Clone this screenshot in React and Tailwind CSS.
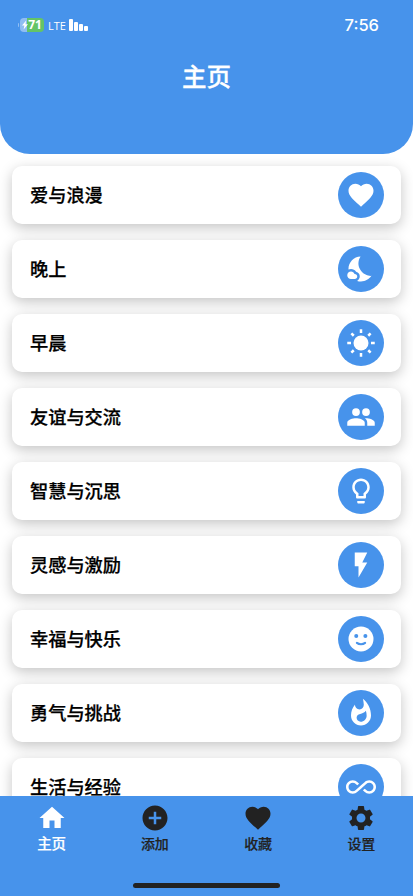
import React, { useState } from "react";
import {
  MdAddCircle,
  MdAllInclusive,
  MdFavorite,
  MdFlashOn,
  MdHome,
  MdLightbulbOutline,
  MdNightsStay,
  MdSettings,
  MdWhatshot,
} from "react-icons/md";

const SmileIcon = ({ size }) => (
  <svg width={size} height={size} viewBox="0 0 24 24" fill="currentColor">
    <circle cx="12" cy="12" r="10" />
    <g className="fill-[#4793eb]">
      <circle cx="8.2" cy="9.5" r="1.6" />
      <circle cx="15.5" cy="9.5" r="1.6" />
    </g>
    <path
      className="stroke-[#4793eb]"
      d="M8.7 15.1c1.8 1.4 4.8 1.4 6.6 0"
      fill="none"
      strokeWidth="1.7"
      strokeLinecap="round"
    />
  </svg>
);

const SunIcon = ({ size }) => (
  <svg
    width={size}
    height={size}
    viewBox="0 0 24 24"
    fill="none"
    stroke="currentColor"
    strokeWidth="2"
  >
    <circle cx="12" cy="12" r="6" fill="currentColor" stroke="none" />
    <path d="M12 1v3M12 20v3M1 12h3M20 12h3M4.3 4.3l1.9 1.9M17.8 17.8l1.9 1.9M4.3 19.7l1.9-1.9M17.8 6.2l1.9-1.9" />
  </svg>
);

const PeopleIcon = ({ size }) => (
  <svg width={size} height={size} viewBox="0 0 24 24" fill="currentColor">
    <circle cx="8" cy="8" r="3.1" />
    <circle cx="16" cy="8" r="3.1" />
    <path d="M8 13c-2.33 0-7 1.17-7 3.5V19h14v-2.5c0-2.33-4.67-3.5-7-3.5zM16 13c-.29 0-.62.02-.97.05 1.16.84 1.97 1.97 1.97 3.45V19h6v-2.5c0-2.33-4.67-3.5-7-3.5z" />
  </svg>
);

const categories = [
  { title: "爱与浪漫", Icon: MdFavorite },
  { title: "晚上", Icon: MdNightsStay },
  { title: "早晨", Icon: SunIcon },
  { title: "友谊与交流", Icon: PeopleIcon },
  { title: "智慧与沉思", Icon: MdLightbulbOutline },
  { title: "灵感与激励", Icon: MdFlashOn },
  { title: "幸福与快乐", Icon: SmileIcon },
  { title: "勇气与挑战", Icon: MdWhatshot },
  { title: "生活与经验", Icon: MdAllInclusive },
];

const tabs = [
  { label: "主页", Icon: MdHome },
  { label: "添加", Icon: MdAddCircle },
  { label: "收藏", Icon: MdFavorite },
  { label: "设置", Icon: MdSettings },
];

const StatusBar = () => (
  <div className="flex h-[50px] items-center justify-between pl-[18px] pr-[34px]">
    <div className="flex items-center">
      <span className="mr-px h-1 w-px rounded-l bg-white/40" />
      <span className="flex h-[14px] w-6 items-center justify-center rounded-[4px] bg-linear-to-r from-[#8fbdf3] from-30% to-[#64c466] to-30% font-['Open_Sans'] text-[12px] font-bold leading-none">
        <svg className="h-[10px] w-[6px]" viewBox="0 0 6 9" fill="currentColor">
          <path d="M4.2 0L0 5h2.4L1.6 9 6 3.8H3.5z" />
        </svg>
        71
      </span>
      <span className="ml-1 mt-px font-['Open_Sans'] text-[11px] font-medium leading-none">
        LTE
      </span>
      <span className="ml-[3px] flex h-3 items-end gap-[1.3px]">
        <span className="h-3 w-[3.7px] rounded-[1px] bg-white" />
        <span className="h-[9px] w-[3.7px] rounded-[1px] bg-white" />
        <span className="h-[7px] w-[3.7px] rounded-[1px] bg-white" />
        <span className="h-[5px] w-[3.7px] rounded-[1px] bg-white" />
      </span>
    </div>
    <span className="text-[16.5px] font-medium leading-none">7:56</span>
  </div>
);

const App = () => {
  const [active, setActive] = useState("主页");

  return (
    <div className="flex h-[896px] w-full flex-col overflow-hidden bg-white font-['Inter','Noto_Sans_CJK_SC',sans-serif]">
      <header className="z-10 h-[154px] shrink-0 rounded-b-[30px] bg-[#4793eb] text-white">
        <StatusBar />
        <h1 className="mt-[9px] text-center text-[24.5px] font-medium leading-9 [-webkit-text-stroke:0.3px_white]">
          主页
        </h1>
      </header>

      <main className="flex min-h-0 flex-1 flex-col gap-4 overflow-hidden px-3 pt-3">
        {categories.map(({ title, Icon }) => (
          <div
            key={title}
            className="flex h-[58px] shrink-0 items-center justify-between rounded-[10px] bg-white pl-[18px] pr-[17px] shadow-[0_4px_14px_rgba(0,0,0,0.23)]"
          >
            <span className="pt-0.5 text-[18.2px] font-medium text-black [-webkit-text-stroke:0.25px_black]">
              {title}
            </span>
            <span className="flex size-[46px] items-center justify-center rounded-full bg-[#4793eb] text-white">
              <Icon size={30} />
            </span>
          </div>
        ))}
      </main>

      <nav className="z-10 flex h-[100px] shrink-0 flex-col justify-between bg-[#4793eb] pb-2">
        <div className="flex">
          {tabs.map(({ label, Icon }) => (
            <button
              key={label}
              onClick={() => setActive(label)}
              className={`flex flex-1 flex-col items-center pt-[7px] font-medium [-webkit-text-stroke:0.2px_currentColor] ${
                active === label
                  ? "text-[14.5px] text-white"
                  : "text-sm text-[#222222]"
              }`}
            >
              <Icon size={30} />
              <span className="mt-px leading-5">{label}</span>
            </button>
          ))}
        </div>
        <div className="mx-auto h-[5px] w-[147px] rounded-full bg-[#222222]" />
      </nav>
    </div>
  );
};

export default App;
